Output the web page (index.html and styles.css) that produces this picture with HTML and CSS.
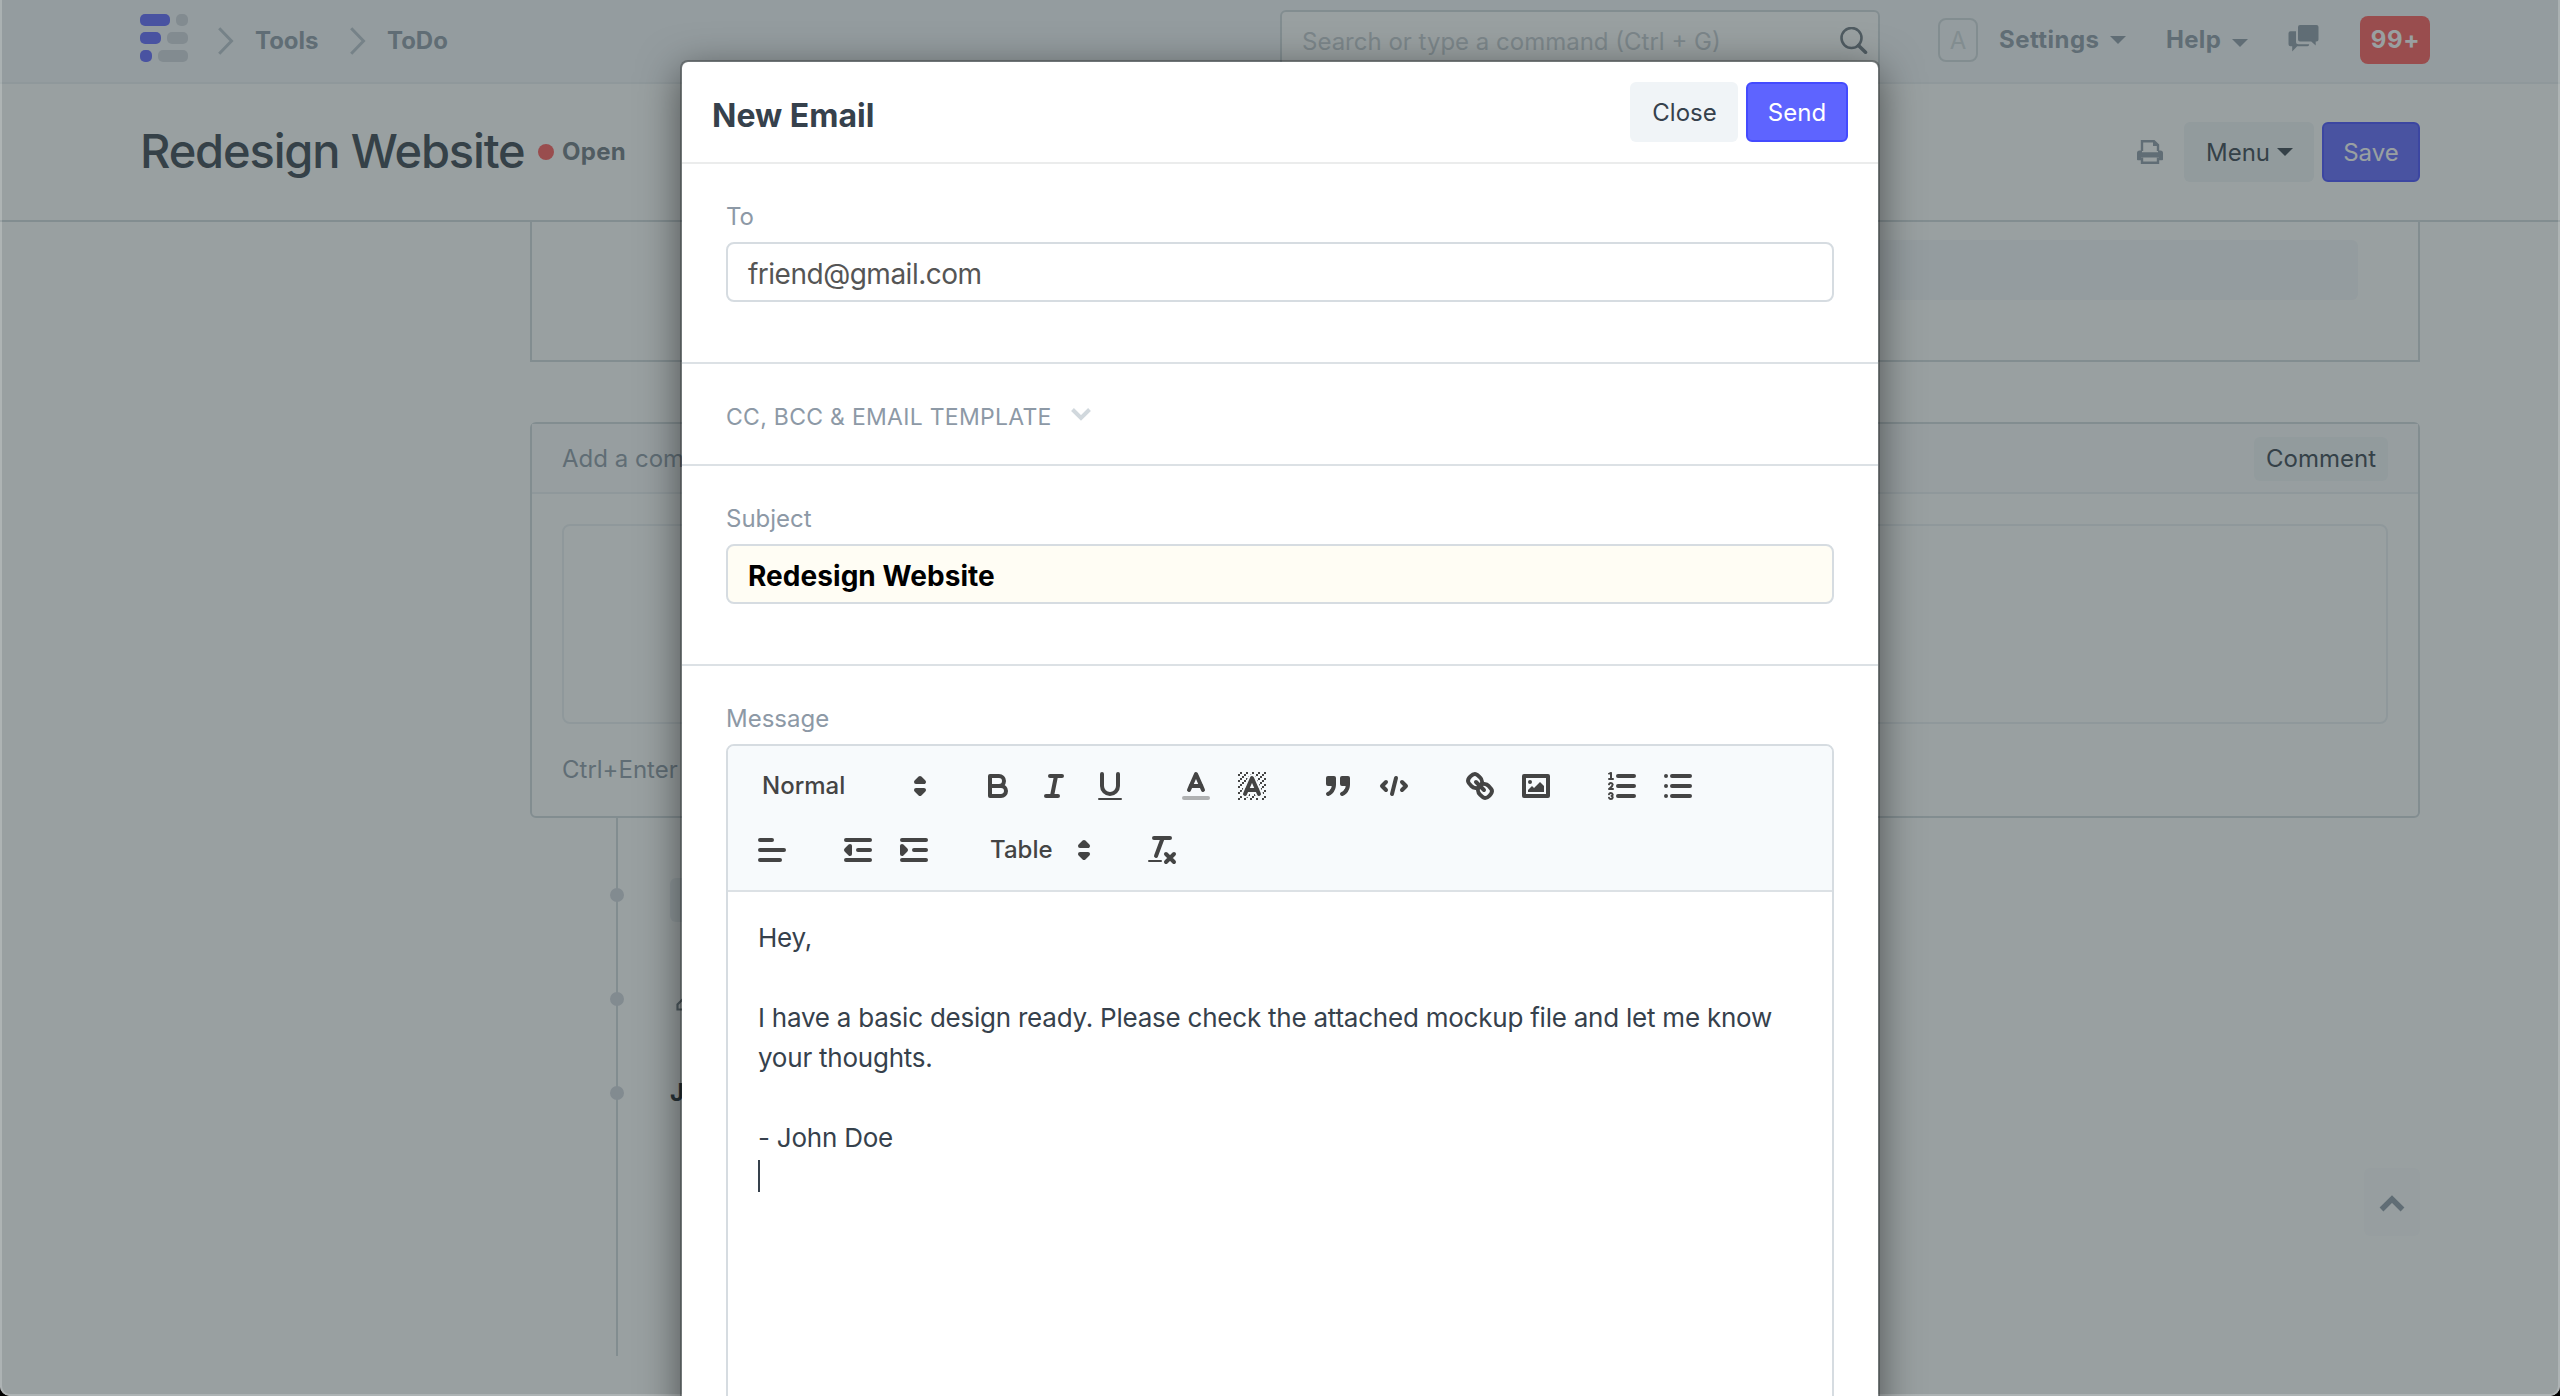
FILE: index.html
```html
<!DOCTYPE html>
<html lang="en">
<head>
<meta charset="utf-8">
<title>Redesign Website</title>
<link rel="stylesheet" href="styles.css">
</head>
<body>
<div class="window">
  <header class="navbar">
    <div class="crumbs">
      <svg class="logo" width="48" height="48" viewBox="0 0 48 48">
        <g fill="#5e64ff"><rect width="30" height="12" rx="5"/><rect y="18" width="21" height="12" rx="5"/><rect y="36" width="12" height="12" rx="5"/></g>
        <g fill="#d1d4dd"><rect x="36" width="12" height="12" rx="5"/><rect x="27" y="18" width="21" height="12" rx="5"/><rect x="18" y="36" width="30" height="12" rx="5"/></g>
      </svg>
      <a class="crumb"><svg width="16" height="28" viewBox="0 0 16 28"><path d="M1.2 1.2L13.5 14L1.2 26.8" fill="none" stroke="#b8c2cc" stroke-width="3"/></svg>Tools</a>
      <a class="crumb"><svg width="16" height="28" viewBox="0 0 16 28"><path d="M1.2 1.2L13.5 14L1.2 26.8" fill="none" stroke="#b8c2cc" stroke-width="3"/></svg>ToDo</a>
    </div>
    <div class="search">
      <span>Search or type a command (Ctrl + G)</span>
      <svg width="28" height="28" viewBox="0 0 28 28" fill="none" stroke="#6c7680"><circle cx="11.5" cy="11" r="10" stroke-width="2.6"/><path d="M18.5 18.5L25.5 25.2" stroke-width="3.6" stroke-linecap="round"/></svg>
    </div>
    <nav class="tools">
      <span class="avatar">A</span>
      <span class="menu-item settings">Settings<i class="caret"></i></span>
      <span class="menu-item help">Help<i class="caret"></i></span>
      <svg class="chat" width="32" height="28" viewBox="0 0 32 28" fill="#8d99a6"><path d="M12 0h16.500q2 0 2 2v12.500q0 2-2 2h-.8V20.500l-4.500-4H12q-2 0-2-2V2q0-2 2-2z"/><path d="M8 6.200H2.500q-2 0-2 2v11q0 2 2 2H4.200V26.500l5-5.300H19.500q1.700 0 1.700-2H10.500q-2.500 0-2.500-2.500z"/></svg>
      <span class="badge">99+</span>
    </nav>
  </header>

  <section class="page-head">
    <h1>Redesign Website</h1>
    <i class="dot"></i><span class="status">Open</span>
    <div class="actions">
      <svg width="26" height="24" viewBox="0 0 26 24"><path d="M5 11V1.200H17L21 5V11" fill="none" stroke="#8d99a6" stroke-width="2.400"/><path d="M16 1v5h5.500z" fill="#8d99a6"/><path d="M2.500 10.500H5V12.200H21V10.500h2.500Q26 10.500 26 13v6.500q0 .8-.8.8H22V17.500H4v2.800H.8Q0 20.300 0 19.500V13Q0 10.500 2.500 10.500z" fill="#8d99a6"/><path d="M5 17.500V22.800H21V17.500" fill="none" stroke="#8d99a6" stroke-width="2.400"/></svg>
      <button class="btn menu">Menu<i class="caret dark"></i></button>
      <button class="btn primary">Save</button>
    </div>
  </section>

  <main class="content">
    <div class="form-box"><div class="readonly"></div></div>
    <div class="comment-box">
      <div class="comment-head"><span>Add a comment</span><button class="comment-btn">Comment</button></div>
      <div class="comment-body"><div class="comment-input"></div><p>Ctrl+Enter</p></div>
    </div>
    <div class="timeline">
      <div class="entry email"><i class="bullet"></i><span class="chip"></span></div>
      <div class="entry edit"><i class="bullet"></i><svg width="22" height="24" viewBox="0 0 22 24" fill="none" stroke="#6c7680" stroke-width="2.200"><path d="M1.500 22.500v-5L14 5l5 5L6.500 22.500z"/></svg></div>
      <div class="entry person"><i class="bullet"></i><b>John</b></div>
    </div>
  </main>

  <button class="to-top"><svg width="26" height="18" viewBox="0 0 26 18"><path d="M2.500 14.500L13 4L23.500 14.500" fill="none" stroke="#8d99a6" stroke-width="5.400"/></svg></button>

  <div class="backdrop"></div>

  <div class="modal">
    <div class="modal-head">
      <h2>New Email</h2>
      <button class="btn close">Close</button>
      <button class="btn primary">Send</button>
    </div>
    <div class="section">
      <label>To</label>
      <div class="input">friend@gmail.com</div>
    </div>
    <div class="section toggle">CC, BCC &amp; EMAIL TEMPLATE<svg width="20" height="13" viewBox="0 0 20 13"><path d="M1.500 1.500L10 10L18.500 1.500" fill="none" stroke="#d1d8dd" stroke-width="4"/></svg></div>
    <div class="section">
      <label>Subject</label>
      <div class="input required">Redesign Website</div>
    </div>
    <div class="section message">
      <label>Message</label>
      <div class="editor">
        <div class="toolbar">
          <div class="group">
            <span class="picker heading">Normal<svg viewBox="0 0 18 18"><polygon class="s" points="7 11 9 13 11 11 7 11"/><polygon class="s" points="7 7 9 5 11 7 7 7"/></svg></span>
          </div>
          <div class="group">
            <button><svg viewBox="0 0 18 18"><path class="s" d="M5,4H9.500A2.500,2.500,0,0,1,12,6.500v0A2.500,2.500,0,0,1,9.500,9H5V4Z"/><path class="s" d="M5,9h5.500A2.500,2.500,0,0,1,13,11.500v0A2.500,2.500,0,0,1,10.500,14H5V9Z"/></svg></button>
            <button><svg viewBox="0 0 18 18"><path class="s" d="M7 4H13M5 14H11M8 14L10 4"/></svg></button>
            <button><svg viewBox="0 0 18 18"><path class="s" d="M5,3V9a4.012,4.012,0,0,0,4,4H9a4.012,4.012,0,0,0,4-4V3"/><rect class="f" height="1" rx=".5" ry=".5" width="12" x="3" y="15"/></svg></button>
          </div>
          <div class="group">
            <button><svg viewBox="0 0 18 18"><path class="s faint" d="M3 15H15"/><polyline class="s" points="5.500 11 9 3 12.500 11"/><path class="s" d="M11.630 9H6.380"/></svg></button>
            <button><svg viewBox="0 0 18 18"><g class="f"><polygon points="6 6.868 6 6 5 6 5 7 5.942 7 6 6.868"/><rect height="1" width="1" x="4" y="4"/><polygon points="6.817 5 6 5 6 6 6.380 6 6.817 5"/><rect height="1" width="1" x="2" y="6"/><rect height="1" width="1" x="3" y="5"/><rect height="1" width="1" x="4" y="7"/><polygon points="4 11.439 4 11 3 11 3 12 3.755 12 4 11.439"/><rect height="1" width="1" x="2" y="12"/><rect height="1" width="1" x="2" y="9"/><rect height="1" width="1" x="2" y="15"/><polygon points="4.630 10 4 10 4 11 4.192 11 4.630 10"/><rect height="1" width="1" x="3" y="8"/><path d="M10.832,4.200L11,4.582V4H10.708A1.948,1.948,0,0,1,10.832,4.200Z"/><path d="M7,4.582L7.168,4.200A1.929,1.929,0,0,1,7.292,4H7V4.582Z"/><path d="M8,13H7.683l-0.351.8a1.933,1.933,0,0,1-.124.2H8V13Z"/><rect height="1" width="1" x="12" y="2"/><rect height="1" width="1" x="11" y="3"/><path d="M9,3H8V3.282A1.985,1.985,0,0,1,9,3Z"/><rect height="1" width="1" x="2" y="3"/><rect height="1" width="1" x="6" y="2"/><rect height="1" width="1" x="3" y="2"/><rect height="1" width="1" x="5" y="3"/><rect height="1" width="1" x="9" y="2"/><rect height="1" width="1" x="15" y="14"/><polygon points="13.447 10.174 13.469 10.225 13.472 10.232 13.808 11 14 11 14 10 13.370 10 13.447 10.174"/><rect height="1" width="1" x="13" y="7"/><rect height="1" width="1" x="15" y="5"/><rect height="1" width="1" x="14" y="6"/><rect height="1" width="1" x="15" y="8"/><rect height="1" width="1" x="14" y="9"/><path d="M3.775,14H3v1H4V14.314A1.970,1.970,0,0,1,3.775,14Z"/><rect height="1" width="1" x="14" y="3"/><polygon points="12 6.868 12 6 11.620 6 12 6.868"/><rect height="1" width="1" x="15" y="2"/><rect height="1" width="1" x="12" y="5"/><rect height="1" width="1" x="13" y="4"/><polygon points="12.933 9 13 9 13 8 12.495 8 12.933 9"/><rect height="1" width="1" x="9" y="14"/><rect height="1" width="1" x="8" y="15"/><path d="M6,14.926V15H7V14.316A1.993,1.993,0,0,1,6,14.926Z"/><rect height="1" width="1" x="5" y="15"/><path d="M10.668,13.800L10.317,13H10v1h0.792A1.947,1.947,0,0,1,10.668,13.800Z"/><rect height="1" width="1" x="11" y="15"/><path d="M14.332,12.200a1.990,1.990,0,0,1,.166.8H15V12H14.245Z"/><rect height="1" width="1" x="14" y="15"/><rect height="1" width="1" x="15" y="11"/></g><polyline class="s" points="5.500 13 9 5 12.500 13"/><path class="s" d="M11.630 11H6.380"/></svg></button>
          </div>
          <div class="group">
            <button><svg viewBox="0 0 18 18"><rect class="s f" height="3" width="3" x="4" y="5"/><rect class="s f" height="3" width="3" x="11" y="5"/><path class="s f" fill-rule="evenodd" d="M7,8c0,4.031-3,5-3,5"/><path class="s f" fill-rule="evenodd" d="M14,8c0,4.031-3,5-3,5"/></svg></button>
            <button><svg viewBox="0 0 18 18"><polyline class="s" points="5 7 3 9 5 11"/><polyline class="s" points="13 7 15 9 13 11"/><path class="s" d="M10 5L8 13"/></svg></button>
          </div>
          <div class="group">
            <button><svg viewBox="0 0 18 18"><path class="s" d="M7 7L11 11"/><path class="s" d="M8.900,4.577a3.476,3.476,0,0,1,.36,4.679A3.476,3.476,0,0,1,4.577,8.900C3.185,7.500,2.035,6.400,4.217,4.217S7.500,3.185,8.900,4.577Z"/><path class="s" d="M13.423,9.100a3.476,3.476,0,0,0-4.679-.36,3.476,3.476,0,0,0,.36,4.679c1.392,1.392,2.500,2.542,4.679.36S14.815,10.500,13.423,9.100Z"/></svg></button>
            <button><svg viewBox="0 0 18 18"><rect class="s" height="10" width="12" x="3" y="4"/><circle class="f" cx="6" cy="7" r="1"/><polyline class="f" points="5 12 5 11 7 9 8 10 11 7 13 9 13 12 5 12"/></svg></button>
          </div>
          <div class="group">
            <button><svg viewBox="0 0 18 18"><path class="s" d="M7 4H15M7 9H15M7 14H15"/><path class="s thin" d="M2.500 5.500H4.500"/><path class="f" d="M3.500,6A0.500,0.500,0,0,1,3,5.500V3.085l-0.276.138A0.500,0.500,0,0,1,2.053,3c-0.124-.247-0.023-0.324.224-0.447l1-.5A0.500,0.500,0,0,1,4,2.500v3A0.500,0.500,0,0,1,3.500,6Z"/><path class="s thin" d="M4.500,10.500h-2c0-.234,1.850-1.076,1.850-2.234A0.959,0.959,0,0,0,2.500,8.156"/><path class="s thin" d="M2.500,14.846a0.959,0.959,0,0,0,1.850-.109A0.700,0.700,0,0,0,3.750,14a0.688,0.688,0,0,0,.6-0.736,0.959,0.959,0,0,0-1.850-.109"/></svg></button>
            <button><svg viewBox="0 0 18 18"><path class="s" d="M6 4H15M6 9H15M6 14H15M3 4H3M3 9H3M3 14H3"/></svg></button>
          </div>
          <div class="group">
            <button><svg viewBox="0 0 18 18"><path class="s" d="M3 9H15M3 14H13M3 4H9"/></svg></button>
          </div>
          <div class="group">
            <button><svg viewBox="0 0 18 18"><path class="s" d="M3 14H15M3 4H15M9 9H15"/><polyline class="s f" points="5 7 5 11 3 9 5 7"/></svg></button>
            <button><svg viewBox="0 0 18 18"><path class="s" d="M3 14H15M3 4H15M9 9H15"/><polyline class="s f" points="3 7 3 11 5 9 3 7"/></svg></button>
          </div>
          <div class="group">
            <span class="picker table">Table<svg viewBox="0 0 18 18"><polygon class="s" points="7 11 9 13 11 11 7 11"/><polygon class="s" points="7 7 9 5 11 7 7 7"/></svg></span>
          </div>
          <div class="group">
            <button><svg viewBox="0 0 18 18"><path class="s" d="M5 3H13M6 12L9.350 3M11 11L15 15M15 11L11 15"/><rect class="f" height="1" rx=".5" ry=".5" width="7" x="2" y="14"/></svg></button>
          </div>
        </div>
        <div class="text">
          <p>Hey,</p>
          <p></p>
          <p>I have a basic design ready. Please check the attached mockup file and let me know<br>your thoughts.</p>
          <p></p>
          <p>- John Doe</p>
          <p><i class="cursor"></i></p>
        </div>
      </div>
    </div>
  </div>
</div>
</body>
</html>
```
FILE: styles.css
```css
* { box-sizing: border-box; }
html { background: #000; }
body { margin: 0; }
h1, h2, p { margin: 0; }
button { font: inherit; border: 0; padding: 0; background: none; }
svg { display: block; flex: none; }

.window {
  position: relative;
  width: 2560px;
  height: 1396px;
  overflow: hidden;
  border-radius: 0 0 10px 10px;
  background: #fff;
  font: 24px/36px "Inter", sans-serif;
  color: #36414c;
}

/* navbar */
.navbar {
  display: flex;
  align-items: center;
  height: 84px;
  padding: 0 130px 2px 140px;
  background: #f5f7fa;
  border-bottom: 2px solid #ebeff2;
}
.crumbs { display: flex; align-items: center; width: 1140px; }
.logo { margin: 0 30px 4px 0; }
.crumb { display: flex; align-items: center; gap: 21px; width: 132px; font-weight: 700; color: #8d99a6; padding-top: 2px; }
.search {
  display: flex;
  align-items: center;
  justify-content: space-between;
  width: 600px;
  height: 60px;
  padding: 3px 10px 0 20px;
  border: 2px solid #d1d8dd;
  border-radius: 6px;
  background: #fff;
  color: #c4cbd1;
}
.search svg { margin-bottom: 1px; }
.tools { display: flex; align-items: center; margin-left: 58px; }
.avatar { width: 40px; height: 44px; border: 2px solid #d1d8dd; border-radius: 8px; text-align: center; line-height: 42px; color: #d1d8dd; }
.menu-item { display: flex; align-items: center; justify-content: space-between; font-weight: 700; color: #8d99a6; }
.settings { width: 127px; margin-left: 21px; letter-spacing: .45px; }
.help { width: 82px; margin-left: 40px; letter-spacing: .3px; }
.help .caret { margin-top: 5px; }
.caret { border: 8px solid transparent; border-top-color: currentColor; border-bottom: 0; }
.chat { margin: 0 40px 2px; }
.badge { width: 70px; height: 48px; border-radius: 8px; background: #ff5858; color: #fff; font-weight: 700; text-align: center; line-height: 47px; letter-spacing: .6px; padding-left: 1px; }

/* page head */
.page-head { display: flex; align-items: center; height: 138px; padding: 0 140px 0 140px; border-bottom: 2px solid #d1d8dd; }
h1 { width: 398px; font-size: 47px; line-height: 60px; font-weight: 500; letter-spacing: -1.15px; white-space: nowrap; padding-bottom: 2px; }
.dot { width: 16px; height: 16px; border-radius: 50%; background: #ff5858; }
.status { margin-left: 8px; font-weight: 700; color: #6c7680; letter-spacing: .3px; }
.actions { display: flex; align-items: center; margin-left: auto; }
.btn { height: 60px; border: 2px solid transparent; border-radius: 6px; line-height: 57px; }
.btn.primary { width: 98px; background: #5e64ff; border-color: #444bff; color: #fff; }
.btn.menu { display: flex; align-items: center; justify-content: center; gap: 7px; width: 130px; padding-left: 1px; margin: 0 8px 0 21px; background: #f0f4f7; color: #36414c; }

/* document behind the dialog */
.content { width: 1890px; margin-left: 530px; }
.form-box { height: 140px; padding: 18px 60px 0; border: solid #d1d8dd; border-width: 0 2px 2px; }
.readonly { height: 60px; margin-left: 915px; border-radius: 6px; background: #f5f7fa; }
.comment-box { height: 396px; margin-top: 60px; border: 2px solid #d1d8dd; border-radius: 6px; }
.comment-head { display: flex; align-items: center; justify-content: space-between; height: 70px; padding: 0 30px; border-bottom: 2px solid #ebeff2; background: #fafbfc; color: #8d99a6; }
.comment-head span { padding-top: 2px; }
.comment-btn { width: 134px; height: 44px; margin-top: 2px; border-radius: 6px; background: #f0f4f7; color: #36414c; }
.comment-body { padding: 30px; color: #8d99a6; }
.comment-input { height: 200px; margin-bottom: 28px; border: 2px solid #ebeff2; border-radius: 8px; }
.timeline { height: 538px; margin-left: 86px; padding-top: 55px; border-left: 2px solid #d1d8dd; }
.entry { display: flex; align-items: center; height: 44px; }
.bullet { width: 14px; height: 14px; margin-left: -8px; border-radius: 50%; background: #d1d4dd; }
.chip { width: 300px; height: 44px; margin: 10px 0 0 46px; border-radius: 6px; background: #ebeff2; }
.edit { margin-top: 60px; }
.edit svg { margin-left: 52px; }
.person { margin-top: 50px; }
.person b { margin-left: 46px; color: #1f272e; font-weight: 700; }
.to-top { position: absolute; left: 2364px; top: 1168px; width: 56px; height: 68px; padding-top: 4px; display: flex; align-items: center; justify-content: center; border-radius: 6px; background: #fafbfc; }

.backdrop { position: absolute; inset: 0; background: rgba(51, 65, 67, .5); border: solid rgba(255, 255, 255, .2); border-width: 0 2px 2px; border-radius: 0 0 10px 10px; }

/* dialog */
.modal {
  position: absolute;
  left: 680px;
  top: 60px;
  width: 1200px;
  height: 1400px;
  border: 2px solid rgba(0, 0, 0, .25);
  border-radius: 8px;
  background: #fff;
  background-clip: padding-box;
  box-shadow: 0 10px 40px rgba(0, 0, 0, .5);
}
.modal-head { display: flex; align-items: center; height: 102px; padding: 0 30px 0 30px; border-bottom: 2px solid #ebecec; }
h2 { flex: 1; font-size: 32px; font-weight: 700; padding-top: 7px; }
.modal-head .btn { margin-bottom: 1px; }
.btn.close { width: 108px; padding-left: 1px; margin-right: 8px; background: #f0f4f7; color: #36414c; }
.modal-head .btn.primary { width: 102px; }
.section { height: 200px; padding: 35px 44px 0; border-bottom: 2px solid #dce1e5; color: #8d99a6; }
.section label { display: block; margin-bottom: 7px; }
.input { height: 60px; padding-left: 20px; border: 2px solid #d6dce1; border-radius: 8px; font-size: 28px; line-height: 61px; letter-spacing: -.5px; color: #555; }
.input.required { background: #fffdf4; color: #000; font-weight: 700; letter-spacing: .05px; }
.section.toggle { display: flex; align-items: center; gap: 19px; height: 102px; padding-top: 5px; font-size: 23px; letter-spacing: .28px; }
.toggle svg { margin-bottom: 4px; }
.section.message { height: auto; border: 0; }

.editor { height: 700px; border: 2px solid #d6dce1; border-radius: 8px; overflow: hidden; }
.toolbar { display: flex; flex-wrap: wrap; align-content: flex-start; gap: 16px 30px; height: 146px; padding: 16px 46px 16px 16px; border-bottom: 2px solid #dce1e5; background: #f7fafc; color: #444; font-weight: 500; }
.group { display: flex; height: 48px; }
.group button { width: 56px; height: 48px; padding: 6px 10px; }
.group svg { width: 36px; height: 36px; }
.picker { display: flex; align-items: center; justify-content: space-between; padding: 0 2px 0 18px; height: 48px; }
.picker.heading { width: 196px; }
.picker.table { width: 132px; }
.s { fill: none; stroke: #444; stroke-width: 2; stroke-linecap: round; stroke-linejoin: round; }
.f, .s.f { fill: #444; }
.thin { stroke-width: 1; }
.faint { opacity: .4; }
.text { padding: 26px 30px; font-size: 26px; line-height: 40px; letter-spacing: -.23px; color: #36414c; }
.text p { min-height: 40px; white-space: nowrap; }
.cursor { display: block; width: 2px; height: 32px; background: #36414c; position: relative; top: 2px; }
```
